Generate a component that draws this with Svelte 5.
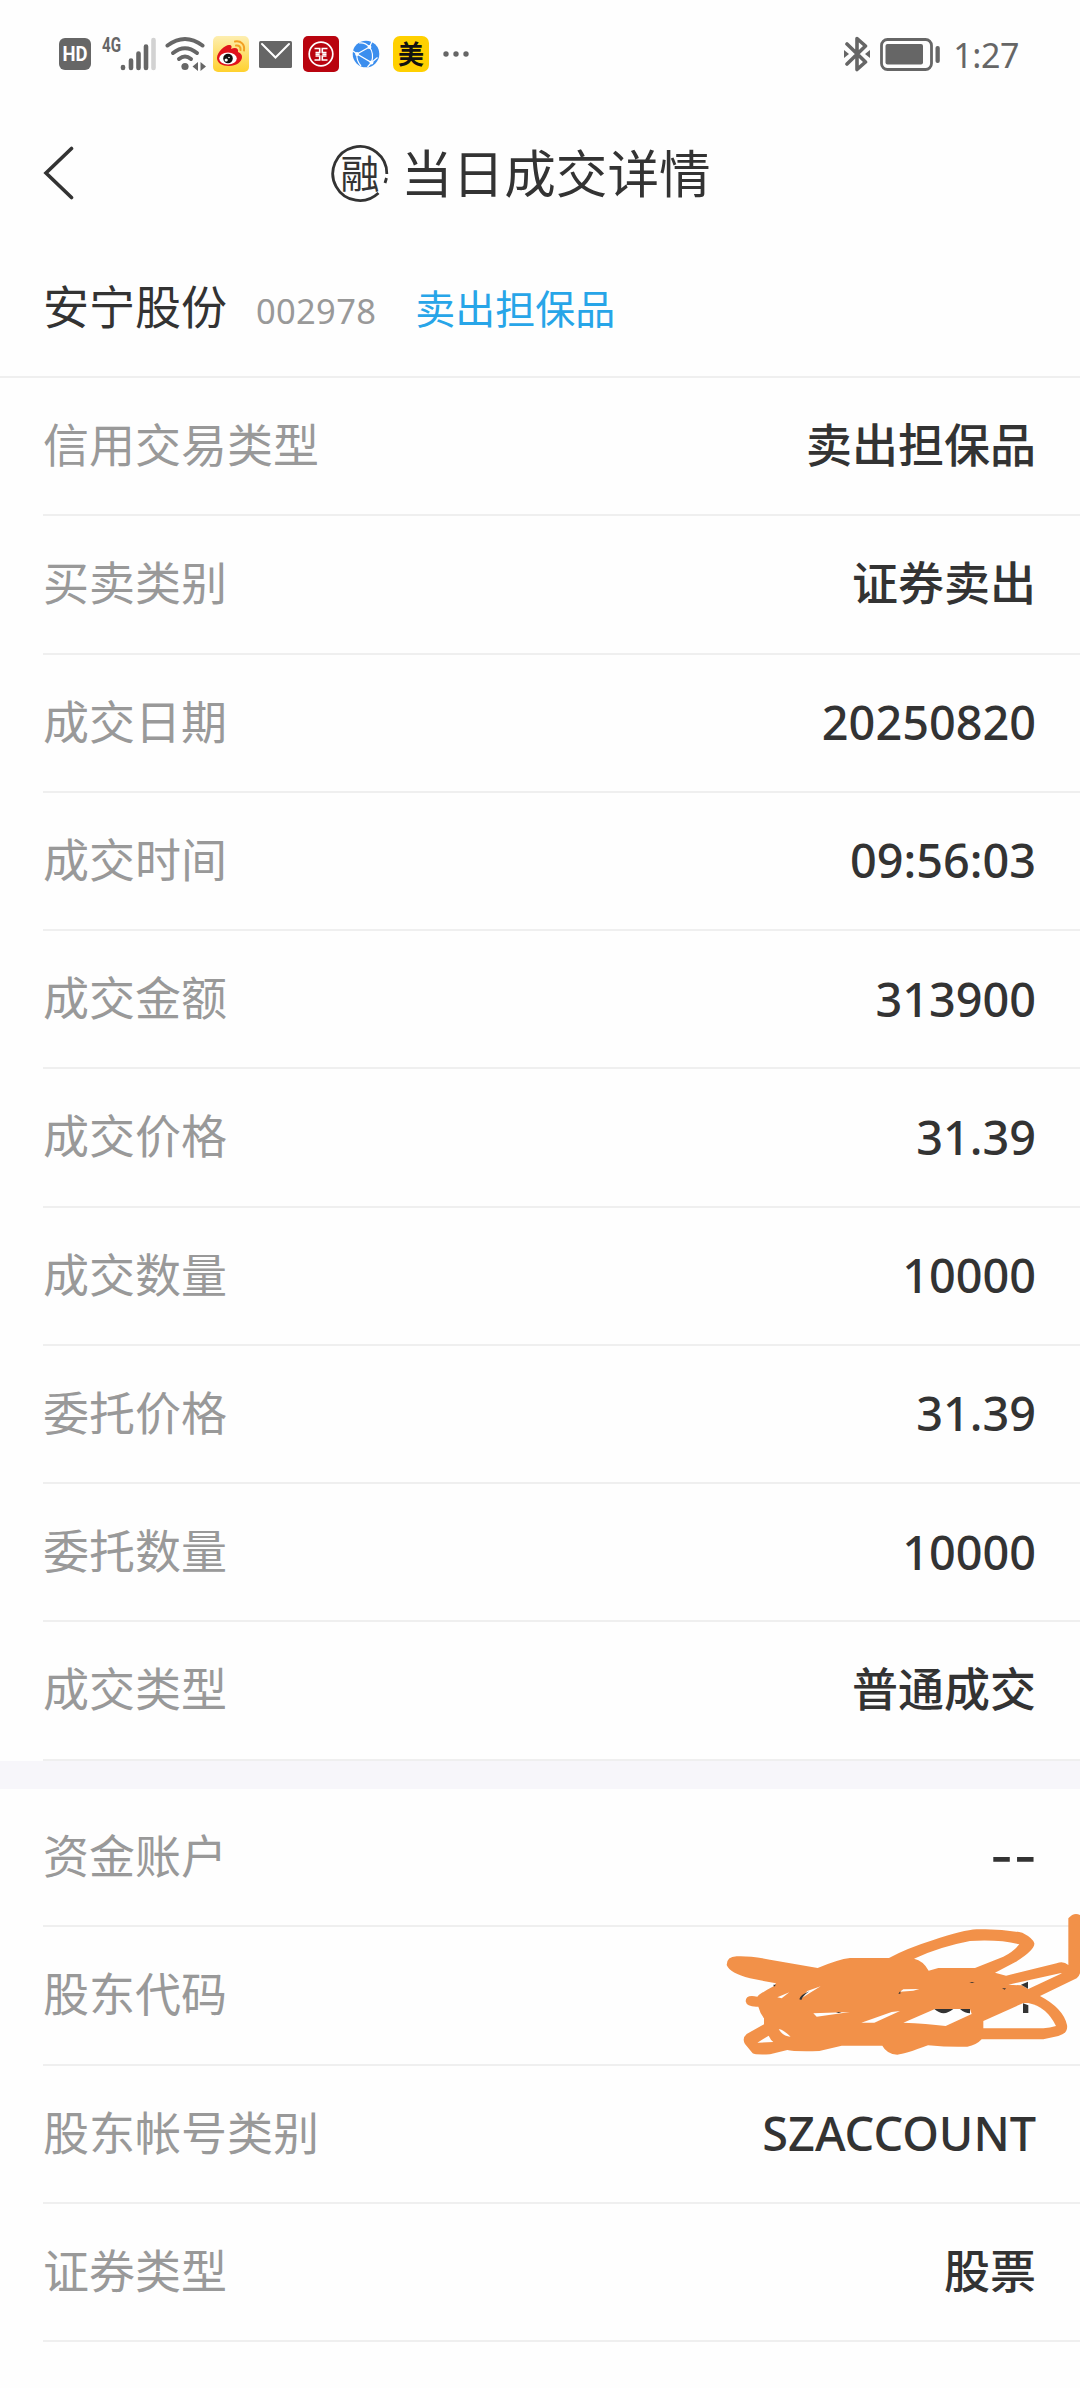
<script>
  // Rows of the trade itself.
  const tradeRows = [
    { label: '信用交易类型', value: '卖出担保品' },
    { label: '买卖类别', value: '证券卖出' },
    { label: '成交日期', value: '20250820' },
    { label: '成交时间', value: '09:56:03' },
    { label: '成交金额', value: '313900' },
    { label: '成交价格', value: '31.39' },
    { label: '成交数量', value: '10000' },
    { label: '委托价格', value: '31.39' },
    { label: '委托数量', value: '10000' },
    { label: '成交类型', value: '普通成交' }
  ];

  // Rows of the account the trade belongs to.
  const accountRows = [
    { label: '资金账户', value: '--' },
    { label: '股东代码', value: '', hidden: true },
    { label: '股东帐号类别', value: 'SZACCOUNT' },
    { label: '证券类型', value: '股票' }
  ];

  const isLatin = (text) => /^[\x20-\x7e]+$/.test(text);
</script>

<main class="screen">
  <div class="status">
    <div class="status-left">
      <svg class="hd" width="34" height="34" viewBox="0 0 34 34">
        <rect x="1" y="1" width="32" height="32" rx="6" fill="#666" />
        <text x="17" y="24" text-anchor="middle" textLength="25" lengthAdjust="spacingAndGlyphs">HD</text>
      </svg>
      <svg class="signal" width="54" height="44" viewBox="0 -4 54 44">
        <text x="0" y="15.500" textLength="19" lengthAdjust="spacingAndGlyphs">4G</text>
        <g stroke-width="4.600" stroke-linecap="round" stroke="#666">
          <path d="M21 31v1M29 24.500v7.500M36.500 17.500V32M44 10.500V32" />
          <path d="M51.500 4V32" stroke="#d2d2d2" />
        </g>
      </svg>
      <svg class="wifi" width="42" height="36" viewBox="0 0 42 36">
        <g fill="none" stroke="#666" stroke-width="4" stroke-linecap="round">
          <path d="M2.500 9.500Q20 -3.500 37.500 9.500" />
          <path d="M8 17Q20 7.500 32 17" />
          <path d="M14 23Q20 18 26 23" />
        </g>
        <circle cx="20" cy="30.500" r="3.600" fill="#666" />
        <path d="M33 26v9l-5.500-4.500zM35.500 26v9l5.500-4.500z" fill="#666" />
      </svg>
      <svg class="weibo" width="36" height="36" viewBox="0 0 36 36">
        <defs>
          <linearGradient id="weibo-bg" x1="0" y1="0" x2="0" y2="1">
            <stop offset="0" stop-color="#fdeeb0" />
            <stop offset="1" stop-color="#ffd12e" />
          </linearGradient>
        </defs>
        <rect width="36" height="36" rx="5" fill="url(#weibo-bg)" />
        <path d="M4 22c0-6 8-13 12-13 3 0 3 2 2 4 4-2 8-1 7 3 3 1 4 3 4 5 0 5-6 9-13 9S4 27 4 22z" fill="#e1121b" />
        <ellipse cx="15" cy="22.500" rx="8.800" ry="6" fill="#fff" />
        <circle cx="15" cy="22.500" r="4.800" fill="#111" />
        <circle cx="13.200" cy="24" r="1.600" fill="#fff" />
        <circle cx="16" cy="21.500" r=".8" fill="#fff" />
        <path d="M22 5.500c6-1 10 3 9 9M23 9.500c3-.5 5 1.500 4.500 4.500" fill="none" stroke="#f2a024" stroke-width="2" stroke-linecap="round" />
      </svg>
      <svg class="mail" width="33" height="27" viewBox="0 0 33 27">
        <rect width="33" height="27" rx="1.500" fill="#666" />
        <path d="M3 3l13.500 13.500L30 3" fill="none" stroke="#fff" stroke-width="2" stroke-linecap="round" />
      </svg>
      <svg class="bank" width="36" height="36" viewBox="0 0 36 36">
        <rect width="36" height="36" rx="5" fill="#b9040f" />
        <circle cx="18" cy="18" r="11.800" fill="none" stroke="#fff" stroke-width="1.700" />
        <path d="M11.500 12.500h5.200v4h-4.200M12.500 20h4.200v4h-5.200M24.500 12.500h-5.200v4h4.200M23.500 20h-4.200v4h5.200M12.500 18.200h4.200M19.300 18.200h4.200" fill="none" stroke="#fff" stroke-width="1.600" />
      </svg>
      <svg class="globe" width="28" height="28" viewBox="0 0 28 28">
        <circle cx="14" cy="14" r="13.300" fill="#3b8eee" />
        <path d="M17.500 7L5 14l14.500 8.500Q22.500 14 17.500 7L20 1.500M17.500 7Q13 2 7 3M5 14l-4-3M5 14Q4 20 9 26M19.500 22.500l6-5M19.500 22.500l-4 4.500" fill="none" stroke="#fff" stroke-width="1.200" />
        <circle cx="17.500" cy="7" r="1.900" fill="#fff" />
        <circle cx="5" cy="14" r="1.900" fill="#fff" />
        <circle cx="19.500" cy="22.500" r="1.900" fill="#fff" />
      </svg>
      <span class="meituan">美</span>
      <svg class="more" width="26" height="6" viewBox="0 0 26 6" fill="#666">
        <circle cx="3" cy="3" r="2.700" />
        <circle cx="13" cy="3" r="2.700" />
        <circle cx="23" cy="3" r="2.700" />
      </svg>
    </div>
    <div class="status-right">
      <svg class="bluetooth" width="26" height="36" viewBox="0 0 26 36">
        <path d="M3 8l18.500 18-8.500 7.500V2.500L21.500 10 3 28" fill="none" stroke="#666" stroke-width="3.600" stroke-linejoin="round" stroke-linecap="round" />
        <path d="M0 14l5 4-5 4zM26 14l-5 4 5 4z" fill="#666" />
      </svg>
      <svg class="battery" width="60" height="33" viewBox="0 0 60 33">
        <rect x="1.500" y="1.500" width="50" height="30" rx="6" fill="none" stroke="#666" stroke-width="2.800" />
        <rect x="5.500" y="6" width="37.500" height="20.500" rx="2" fill="#666" />
        <rect x="55.500" y="8" width="4.300" height="17" rx="2" fill="#666" />
      </svg>
      <span class="clock">1:27</span>
    </div>
  </div>

  <header class="nav">
    <svg class="back" width="32" height="54" viewBox="0 0 32 54">
      <path d="M29.500 2.500L4 27l25.500 24.500" fill="none" stroke="#333" stroke-width="3.600" stroke-linecap="round" />
    </svg>
    <h1>
      <span class="margin-badge">
        <svg width="58" height="58" viewBox="0 0 58 58">
          <path d="M55.800 30A27 27 0 1 0 47.500 49M55.500 34l-1.500 5" fill="none" stroke="#333" stroke-width="2.800" />
        </svg>
        <span>融</span>
      </span>
      <span class="title">当日成交详情</span>
    </h1>
  </header>

  <section class="stock">
    <span class="name">安宁股份</span>
    <span class="code">002978</span>
    <span class="side">卖出担保品</span>
  </section>

  <section class="rows">
    {#each tradeRows as row}
      <div class="row">
        <span class="label">{row.label}</span>
        <span class="value" class:latin={isLatin(row.value)}>{row.value}</span>
      </div>
    {/each}
  </section>

  <div class="gap"></div>

  <section class="rows">
    {#each accountRows as row}
      <div class="row">
        <span class="label">{row.label}</span>
        {#if row.hidden}
          <!-- pen strokes over the shareholder code -->
          <svg class="scribble" width="380" height="190" viewBox="0 0 1140 570">
            <path d="M110 199Q80 200 80 225Q90 250 150 265L228 280L222 288Q180 310 172 320Q137 312 137 334Q140 352 175 350Q180 370 192 385V403L140 432Q125 445 135 462L158 490Q165 495 210 493L262 480Q280 485 358 483L425 467H547Q560 492 592 494Q615 492 684 466Q750 472 802 470Q830 465 845 448H1030L1075 438Q1105 430 1101 405Q1090 355 1020 318L1130 265Q1138 258 1140 250V75Q1122 65 1105 85V225Q1090 212 1070 220L918 257L885 248L945 217Q1005 180 1003 160Q1000 145 967 128Q900 115 830 118Q790 120 700 150Q620 175 567 204H450Q415 208 353 234L210 209Q150 197 110 199Z" fill="#f29149" />
            <g fill="#fefefe">
              <path d="M642 206Q720 170 810 153Q900 148 958 163Q940 185 910 200L825 234H715L686 242Q670 212 642 206Z" />
              <path d="M925 284L1080 250H1086L985 297L965 286Z" />
              <path d="M850 393L970 339H985Q1040 350 1068 408Q1050 414 1030 415H850Z" />
              <path d="M172 458L206 437Q212 450 220 456Z" />
              <path d="M610 398L705 357H810L815 372L737 408Q680 400 610 398Z" />
              <path d="M484 398L575 366L600 363L523 398Z" />
              <path d="M340 370L450 366L350 380Z" />
              <path d="M600 305L610 298L658 297L640 302Z" />
              <path d="M300 328L322 303L362 289L328 310Z" />
              <path d="M232 322L268 307L245 325Z" />
              <path d="M236 418Q245 415 272 440Q250 440 236 418Z" />
            </g>
            <g fill="#333">
              <path d="M703 357H760Q730 382 703 357ZM780 357H810V370Q795 370 780 357ZM969 340L985 346V369H969ZM963 284L984 275V296Z" />
              <path d="M298 328Q300 315 328 304Q308 318 304 330Z" />
              <path d="M220 284l8 0-6 6zM595 311l6-8v8zM408 369l8-3 8 3zM808 279l8-3 8 3zM906 295l12 0-4 4z" />
            </g>
          </svg>
        {:else}
          <span class="value" class:latin={isLatin(row.value)} class:dashes={row.value === '--'}>{row.value}</span>
        {/if}
      </div>
    {/each}
  </section>
</main>

<style>
  :global(body) {
    margin: 0;
    background: #fefefe;
  }

  .screen {
    width: 1080px;
    height: 2388px;
    overflow: hidden;
    background: #fefefe;
    color: #333;
    font-family: 'Noto Sans CJK SC', sans-serif;
  }

  .status {
    display: flex;
    justify-content: space-between;
    align-items: center;
    height: 108px;
    padding: 0 61px 0 58px;
  }

  .status-left, .status-right {
    display: flex;
    align-items: center;
  }

  .hd text {
    font: 700 20px Roboto, sans-serif;
    fill: #fff;
  }

  .signal {
    margin-left: 10px;
  }

  .signal text {
    font: 700 20px Roboto, sans-serif;
    fill: #666;
  }

  .wifi {
    margin-left: 9px;
  }

  .weibo {
    margin-left: 6px;
  }

  .mail {
    margin-left: 10px;
  }

  .bank {
    margin-left: 11px;
  }

  .globe {
    margin-left: 13px;
  }

  .meituan {
    width: 36px;
    height: 36px;
    margin-left: 13px;
    border-radius: 7px;
    background: #ffd000;
    color: #111;
    font-size: 26px;
    font-weight: 700;
    line-height: 34px;
    text-align: center;
  }

  .more {
    margin-left: 14px;
  }

  .battery {
    margin-left: 10px;
  }

  .clock {
    margin-left: 13px;
    color: #666;
    font-family: 'Noto Sans', sans-serif;
    font-size: 34px;
    letter-spacing: -0.4px;
    line-height: 40px;
    padding-top: 2px;
  }

  .nav {
    display: flex;
    align-items: center;
    height: 130px;
    padding-left: 42px;
  }

  h1 {
    display: flex;
    align-items: center;
    margin: 0 0 0 257px;
    font-size: 51.600px;
    font-weight: 400;
    line-height: 60px;
  }

  .margin-badge {
    display: grid;
    place-items: center;
    width: 58px;
    height: 58px;
    margin-right: 12px;
  }

  .margin-badge > * {
    grid-area: 1 / 1;
  }

  .margin-badge span {
    padding-bottom: 5px;
    font-size: 39px;
    line-height: 50px;
  }

  .title {
    padding-bottom: 5px;
  }

  .stock {
    display: flex;
    align-items: baseline;
    box-sizing: border-box;
    height: 140px;
    padding: 36px 0 0 43px;
    border-bottom: 2px solid #efefef;
    line-height: 60px;
  }

  .name {
    font-size: 46px;
  }

  .code {
    margin-left: 29px;
    color: #999;
    font-family: 'Noto Sans', sans-serif;
    font-size: 34.500px;
    letter-spacing: 0.300px;
  }

  .side {
    margin-left: 39px;
    color: #27a5e8;
    font-size: 40px;
  }

  .row {
    display: flex;
    justify-content: space-between;
    align-items: center;
    box-sizing: border-box;
    height: 138.250px;
    margin-left: 43px;
    padding-right: 44px;
    border-bottom: 2px solid #efefef;
    font-size: 46px;
    line-height: 60px;
  }

  .label, .value {
    padding-bottom: 8px;
  }

  .label {
    color: #999;
  }

  .value {
    font-weight: 500;
  }

  .latin {
    padding-bottom: 1px;
    font-family: 'Noto Sans', sans-serif;
    font-size: 46.800px;
  }

  .dashes {
    margin-right: -1px;
    font-family: Inter, sans-serif;
    font-size: 51px;
  }

  .gap {
    height: 28.500px;
    background: #f7f6fa;
  }

  .scribble {
    flex: none;
    position: relative;
    top: -10px;
    margin-right: -44px;
  }
</style>
